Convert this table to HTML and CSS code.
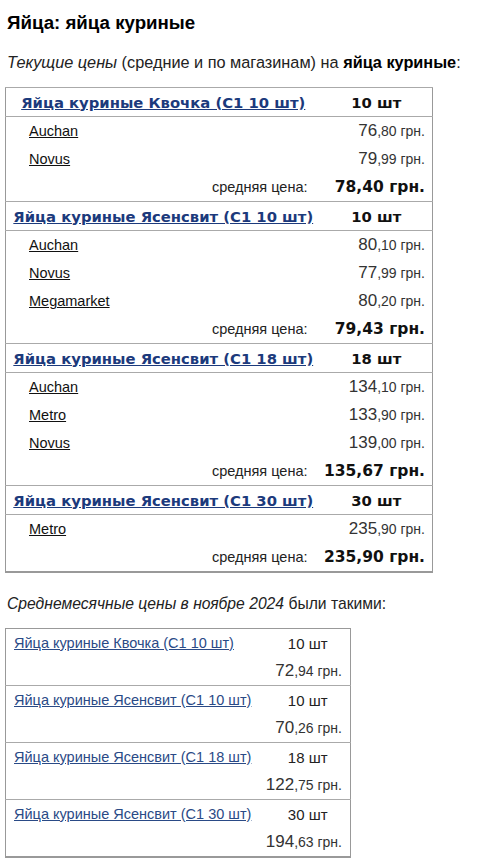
FILE: index.html
```html
<!DOCTYPE html>
<html lang="ru">
<head>
<meta charset="utf-8">
<link rel="stylesheet" href="styles.css">
</head>
<body>
<h1 class="title">Яйца: яйца куриные</h1>
<p class="intro"><i>Текущие цены</i> (средние и по магазинам) на <b>яйца куриные</b>:</p>
<table class="prices">
  <colgroup><col class="c-name"><col class="c-val"></colgroup>
  <tbody>
    <tr class="group"><th class="gname"><a href="#">Яйца куриные Квочка (С1 10 шт)</a></th><th class="gqty">10 шт</th></tr>
    <tr><td class="shop"><a href="#">Auchan</a></td><td class="price"><span class="int">76</span>,80 грн.</td></tr>
    <tr><td class="shop"><a href="#">Novus</a></td><td class="price"><span class="int">79</span>,99 грн.</td></tr>
    <tr class="avg"><td class="avg-label">средняя цена:</td><td class="avg-val">78,40 грн.</td></tr>
  </tbody>
  <tbody>
    <tr class="group"><th class="gname"><a href="#">Яйца куриные Ясенсвит (С1 10 шт)</a></th><th class="gqty">10 шт</th></tr>
    <tr><td class="shop"><a href="#">Auchan</a></td><td class="price"><span class="int">80</span>,10 грн.</td></tr>
    <tr><td class="shop"><a href="#">Novus</a></td><td class="price"><span class="int">77</span>,99 грн.</td></tr>
    <tr><td class="shop"><a href="#">Megamarket</a></td><td class="price"><span class="int">80</span>,20 грн.</td></tr>
    <tr class="avg"><td class="avg-label">средняя цена:</td><td class="avg-val">79,43 грн.</td></tr>
  </tbody>
  <tbody>
    <tr class="group"><th class="gname"><a href="#">Яйца куриные Ясенсвит (С1 18 шт)</a></th><th class="gqty">18 шт</th></tr>
    <tr><td class="shop"><a href="#">Auchan</a></td><td class="price"><span class="int">134</span>,10 грн.</td></tr>
    <tr><td class="shop"><a href="#">Metro</a></td><td class="price"><span class="int">133</span>,90 грн.</td></tr>
    <tr><td class="shop"><a href="#">Novus</a></td><td class="price"><span class="int">139</span>,00 грн.</td></tr>
    <tr class="avg"><td class="avg-label">средняя цена:</td><td class="avg-val">135,67 грн.</td></tr>
  </tbody>
  <tbody>
    <tr class="group"><th class="gname"><a href="#">Яйца куриные Ясенсвит (С1 30 шт)</a></th><th class="gqty">30 шт</th></tr>
    <tr><td class="shop"><a href="#">Metro</a></td><td class="price"><span class="int">235</span>,90 грн.</td></tr>
    <tr class="avg"><td class="avg-label">средняя цена:</td><td class="avg-val">235,90 грн.</td></tr>
  </tbody>
</table>
<p class="intro2"><i>Среднемесячные цены в ноябре 2024</i> были такими:</p>
<table class="monthly">
  <colgroup><col class="m-name"><col class="m-val"></colgroup>
  <tbody>
    <tr><td class="mname"><a href="#">Яйца куриные Квочка (С1 10 шт)</a></td><td class="mqty">10 шт</td></tr>
    <tr><td></td><td class="mprice"><span class="int">72</span>,94 грн.</td></tr>
  </tbody>
  <tbody>
    <tr><td class="mname"><a href="#">Яйца куриные Ясенсвит (С1 10 шт)</a></td><td class="mqty">10 шт</td></tr>
    <tr><td></td><td class="mprice"><span class="int">70</span>,26 грн.</td></tr>
  </tbody>
  <tbody>
    <tr><td class="mname"><a href="#">Яйца куриные Ясенсвит (С1 18 шт)</a></td><td class="mqty">18 шт</td></tr>
    <tr><td></td><td class="mprice"><span class="int">122</span>,75 грн.</td></tr>
  </tbody>
  <tbody>
    <tr><td class="mname"><a href="#">Яйца куриные Ясенсвит (С1 30 шт)</a></td><td class="mqty">30 шт</td></tr>
    <tr><td></td><td class="mprice"><span class="int">194</span>,63 грн.</td></tr>
  </tbody>
</table>
</body>
</html>
```

FILE: styles.css
```css
html, body {
  margin: 0;
  padding: 0;
  background: #fff;
}
body {
  padding: 0 7px 0 5px;
  font-family: "Liberation Sans", Arial, sans-serif;
  color: #111;
}
.title {
  margin: 12px 0 0 2px;
  font-size: 18.7px;
  line-height: 22px;
  font-weight: bold;
  color: #000;
}
.intro {
  margin: 18px 0 15px 2px;
  font-size: 16.3px;
  line-height: 20px;
  color: #222;
}
.intro b {
  color: #000;
}
.prices, .monthly {
  border-collapse: collapse;
  border: 1px solid #999;
  border-bottom: 2px solid #999;
}
.prices { width: 428px; }
.c-name { width: 315px; }
.prices td, .prices th {
  padding: 0;
  height: 28px;
  vertical-align: middle;
}
.group th {
  border-top: 1px solid #aaa;
  border-bottom: 1px solid #aaa;
  font-family: "DejaVu Sans", Verdana, sans-serif;
  font-weight: bold;
  font-size: 14.8px;
  color: #111;
}
.gname { text-align: center; }
.gname a { color: #1c3a7c; }
.gqty { text-align: center; }
.shop {
  padding-left: 23px !important;
  font-size: 14.5px;
}
.shop a { color: #111; }
.price, .mprice {
  text-align: right;
  font-size: 14px;
  color: #333;
}
.price { padding-right: 7px !important; }
.int { font-size: 17px; }
.avg-label {
  text-align: right;
  padding-right: 13px !important;
  font-size: 14.5px;
  color: #222;
}
.avg-val {
  text-align: right;
  padding-right: 7px !important;
  font-family: "DejaVu Sans", Verdana, sans-serif;
  font-weight: bold;
  font-size: 15.5px;
  color: #111;
}
.intro2 {
  margin: 21px 0 14px 2px;
  font-size: 15.7px;
  line-height: 20px;
  color: #222;
}
.monthly { width: 346px; }
.m-name { width: 260px; }
.monthly td {
  padding: 0;
  height: 28px;
  vertical-align: middle;
}
.monthly tbody + tbody tr:first-child td {
  border-top: 1px solid #aaa;
}
.mname {
  padding-left: 8px !important;
  font-size: 14.5px;
}
.mname a { color: #2a4a86; }
.mqty {
  text-align: center;
  font-size: 15px;
  color: #222;
}
.mprice { padding-right: 8px !important; }
```
